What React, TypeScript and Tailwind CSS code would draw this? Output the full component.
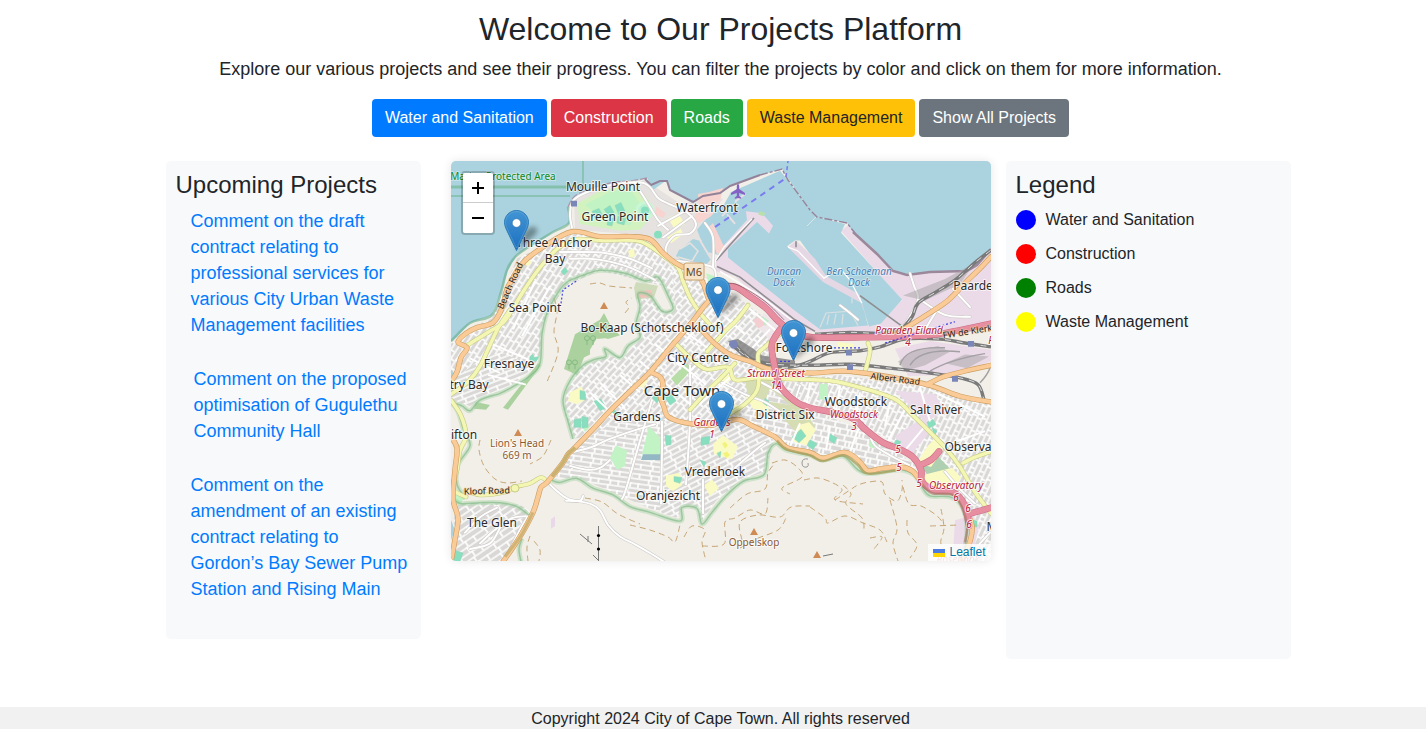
import React from "react";

type Pt = [number, number];

const parse = (s: string): Pt[] =>
  s.split(" ").map((p) => p.split(",").map(Number) as Pt);

/** Turns a list of points into a smooth curve that passes through each one. */
function curve(s: string): string {
  const p = parse(s);
  let d = `M${p[0][0]} ${p[0][1]}`;
  for (let i = 0; i < p.length - 1; i++) {
    const a = p[i - 1] ?? p[i];
    const b = p[i];
    const c = p[i + 1];
    const e = p[i + 2] ?? c;
    d += `C${b[0] + (c[0] - a[0]) / 6} ${b[1] + (c[1] - a[1]) / 6} ${c[0] - (e[0] - b[0]) / 6} ${c[1] - (e[1] - b[1]) / 6} ${c[0]} ${c[1]}`;
  }
  return d;
}

const SURVEY = "matrix(1 0 0 .968 0 5.152)";

function Road({ pts, w, fill, edge }: { pts: string[]; w: number; fill: string; edge: string }) {
  return (
    <g fill="none" strokeLinecap="round" strokeLinejoin="round">
      {pts.map((p) => (
        <path key={"e" + p} d={curve(p)} stroke={edge} strokeWidth={w + 1.2} />
      ))}
      {pts.map((p) => (
        <path key={"f" + p} d={curve(p)} stroke={fill} strokeWidth={w} />
      ))}
    </g>
  );
}

const orange = [
  "451,389 457,379 461,364 467,354 458,348 466,339 477,333 493,328 502,313 506,297 510,287 523,266 543,250 572,234 600,239 630,239 650,242 663,256 675,266 686,272 695,275 703,287 708,302",
  "722,290 705,310 690,330 670,354 650,379 630,399 611,418 593,438 573,459 568,464 562,474 547,493 541,498 538,508 533,524 520,549 503,575",
  "700,334 714,349 730,361 750,368 770,376 810,380 843,378 877,382 927,392 960,404 991,410",
  "927,392 943,384 965,378 991,372",
  "905,334 925,321 948,305 965,287 980,272 991,260",
  "650,379 660,384 663,393 660,402 664,415 668,425 683,431 710,434 737,428 753,435 775,446 787,457 810,462 823,468 843,462 852,465 860,472 868,481 880,479 900,477 912,481 920,491",
  "451,446 457,458 455,480 453,510 458,530 455,552 451,575",
  "965,518 972,538 970,554 962,575",
];
const pink = [
  "720,291 735,291 750,301 766,313 778,326 792,337 812,343 863,343 910,342 943,339 991,329",
  "780,335 772,350 774,370 780,393 795,409 810,416 830,420 853,427 865,438 883,452 900,459 913,467 921,480 922,492 934,501 953,503 965,517 969,538",
  "923,474 932,469 939,461",
  "967,526 978,523 991,519",
];
const yellow = [
  "466,352 485,340 503,328 512,315 525,293 540,271 558,251 575,242 600,243 635,243 650,249 666,261",
  "451,402 468,389 480,373 490,351 499,332 510,315",
  "466,501 480,506 505,503 514,498 530,494 541,488 548,493",
  "451,408 461,424 466,445 460,460 457,480 453,500 466,508",
  "664,259 678,271 683,285 690,302 700,318 710,330",
  "748,310 737,325 724,338 707,358",
  "674,348 690,364 706,376 728,374 735,387 758,385 785,386 830,388 860,395 895,407 912,423 931,442 946,458 960,477 975,503 991,525",
  "783,337 764,354 758,361 759,380 757,398 745,412 728,423",
  "735,370 720,386 706,400 690,418",
  "868,349 870,358 865,379",
  "963,473 975,467 991,461",
];

const white = [
  "572,230 570,215 574,201 590,192 615,185 640,183 650,188 659,200 675,208 688,215 696,226 690,236 675,238 666,250 670,262 690,266 713,271 716,285",
  "634,183 645,200 658,222 668,232",
  "658,228 690,210",
  "663,240 692,218",
  "705,225 713,240 713,271",
  "570,262 590,262 610,265 632,272 655,284",
  "560,255 580,255 605,256 630,262 652,272",
  "568,463 590,457 610,448 632,440 655,433",
  "548,493 555,500 568,510 590,515 600,522 608,537 620,549 635,557 650,566 664,575",
  "566,512 580,512 583,507",
  "662,430 662,460 661,515",
  "690,372 690,430 686,495",
  "652,408 640,450 626,500 622,510",
  "703,490 703,525",
  "570,476 588,480 600,478 610,470",
  "910,277 914,290 918,304 908,325 900,335",
  "920,304 945,320 970,322",
  "953,293 970,312",
  "940,310 925,335",
  "870,445 875,455 890,465 909,475",
  "758,388 780,400 800,412",
  "800,393 795,409",
  "722,390 745,402 765,410 780,420",
  "840,310 850,318 858,325",
  "510,562 521,540 528,528",
  "480,556 495,542 512,530 526,528",
  "465,545 480,529 497,519",
  "470,562 490,556 500,540",
  "735,478 755,460 765,452",
  "972,565 990,545",
  "945,482 960,500 975,515",
];

const rail = [
  "730,349 745,362 760,372 790,374 810,368 830,359 860,357 880,353 905,345 940,345 965,349 991,353",
  "736,352 752,366 775,371 812,372 850,371 890,375 930,380 960,385 978,392 984,408",
  "815,340 850,338 880,339 900,335 912,322 918,308 935,297 955,284 975,266 991,253",
];

const trails = [
  "554,298 557,312 554,332 558,352 547,382",
  "590,284 600,283 609,286 632,288",
  "625,313 629,307 626,302 632,298",
  "480,440 479,450 484,466 495,479 507,483 522,481",
  "551,440 543,456 530,464",
  "585,498 602,502 618,514 640,524",
  "530,536 527,547 528,561",
  "534,541 540,550 539,561",
  "630,525 650,530 668,537 675,542 680,525",
  "684,537 692,526 705,530 702,542 706,561",
  "702,546 724,544 725,522 735,518 750,510 765,514 768,498",
  "730,508 747,494 765,489 768,473 775,463",
  "742,540 740,522 758,515 780,517 791,507 810,506",
  "740,548 756,539 778,530 786,518",
  "772,463 785,460 797,467 802,477 782,488 790,494",
  "804,480 818,478 833,483 842,490 835,500 863,504",
  "835,500 850,490 858,485 869,482 882,482 885,494 897,501 902,490 902,480",
  "843,485 851,494 846,504 862,518 864,530",
  "810,507 825,518 828,523 845,516 863,523 880,530 887,542",
  "890,500 897,528 893,543 898,561",
  "903,487 909,504 921,506 936,515 944,524",
  "907,520 908,533 917,545 910,558",
  "930,526 960,525",
  "941,509 944,528 941,544 952,556",
  "870,538 882,537 874,549",
];

const protectedEdge = [
  "451,410 462,414 470,419 480,408 500,401 510,396 530,383 540,370 542,340 547,318 558,297 567,286 583,279 600,274 625,277 646,285 658,281 668,300 673,314 662,316 650,300 638,298 640,312 636,330 640,343 628,352 620,364 605,355 606,363 595,366 583,372 570,388 563,408 568,430 573,448",
  "552,491 560,493 577,489 593,499 613,506 630,518 650,524 680,533 682,519 697,520 702,536 712,524 725,508 743,492 764,485 768,463 776,453 787,460 810,465 823,470 843,466 858,480 871,484 900,480 915,486 922,498 930,507 950,508 962,518 967,543 962,575",
  "455,512 462,515 480,514 500,514 517,518 530,528",
  "522,551 519,562 521,575",
  "451,410 458,420 464,440 470,455 458,475 457,495 466,510",
];

/** label, x, y, size */
const places: [string, number, number, number][] = [
  ["Mouille Point", 603, 191, 12],
  ["Green Point", 615, 221, 12],
  ["Waterfront", 707, 212, 12],
  ["Three Anchor", 554, 247, 12],
  ["Bay", 555, 263, 12],
  ["Sea Point", 535, 312, 12],
  ["Fresnaye", 509, 368, 12],
  ["try Bay", 469, 389, 12],
  ["ifton", 464, 439, 12],
  ["The Glen", 492, 527, 12],
  ["Bo-Kaap (Schotschekloof)", 652, 332, 12],
  ["City Centre", 698, 362, 12],
  ["Cape Town", 682, 396, 15],
  ["Gardens", 637, 421, 12],
  ["Vredehoek", 715, 476, 12],
  ["Oranjezicht", 668, 500, 12],
  ["Foreshore", 804, 352, 12],
  ["District Six", 785, 419, 12],
  ["Woodstock", 856, 406, 12],
  ["Salt River", 936, 414, 12],
  ["Paarde", 973, 290, 12],
  ["Observa", 968, 451, 12],
  ["M", 992, 531, 12],
];

const stations: [string, number, number, number][] = [
  ["Strand Street", 776, 377, 10],
  ["1A", 776, 389, 10],
  ["Gardens", 712, 426, 10],
  ["1", 712, 438, 10],
  ["Paarden Eiland", 909, 334, 10],
  ["4", 908, 346, 10],
  ["Woodstock", 854, 418, 10],
  ["3", 854, 430, 10],
  ["Observatory", 956, 489, 10],
  ["5", 898, 453, 10],
  ["5", 899, 471, 10],
  ["5", 919, 487, 10],
  ["6", 956, 501, 10],
  ["6", 968, 512, 10],
  ["6", 969, 528, 10],
  ["R", 991, 344, 10],
];

const pitches =
  "M592 213l7-3 4 8-7 4zM604 211l6-4 4 7-5 4zM615 207l6-3 4 9-6 4zM618 218l8 2-2 7-7-2zM608 221l6-1-2 8-5-1zM580 398l5 1 1 9-6-1zM594 409l7-2 5 9-6 3zM574 428l7-1v9h-7zM582 425l6 1v10l-6 1zM612 416l7 7-3 4-6-6zM665 405l6-4 5 8-6 4zM765 406l4 3-2 5-4-3zM830 443l7 4-3 6-5-4zM927 431l6-3 3 5-7 4zM932 436l5 4-3 5zM810 449l7 4-4 6-6-4zM896 449l5 2-2 4-5-2zM701 447l9-2-1 8-8 2zM665 444l6 1v9l-5 1zM700 470l6 2-2 5zM674 487l8 1-2 6-6-2zM973 532l4 1v6h-4zM451 562l12 4-3 9h-9zM530 363l3-2 1 3 5-1-3 5-6-1zM717 463l4-2-1 7zM792 446l9-8 5 7-7 7zM656 400l5 5-4 6-5-5zM561 275l4-4 3 4-4 4z";
const yards =
  "M668 220l10-5 7 11-10 6zM667 240l14-9 2 6-12 9zM570 400l12-6 3 14-8 4-9-3zM713 453l10-9 15 12-6 13-18-5zM666 486l14-3 2 13-9 6-7-5zM704 496l8-6 7 9-9 8zM718 382l8-3 6 7-8 6zM798 434l11-3 7 8-10 16-15-5zM745 403l22 5 2 12-16-3zM838 348l16 2-2 6h-14zM918 471l10-16 9-9 6 14-12 17-7-2zM924 485l28-7 9 10-7 12-22-4-8-4zM628 254l6-3 1 8-5 3zM640 385l8 3-5 8-6-4zM735 412l7 4-4 9-6-4zM525 266l5-3 2 3-5 4z";

function Marker({ x, y }: { x: number; y: number }) {
  return (
    <g>
      <path d={`M${x} ${y}l8-19q7-8 12-4q3 4-5 10z`} fill="#000" opacity=".36" filter="url(#soft)" />
      <g transform={`translate(${x - 12.5} ${y - 41})`}>
        <path
          d="M12.5 .5C5.8 .5.5 5.9.5 12.4c0 2.7 1.2 5.7 2.3 8L12.5 40.5l9.7-20.1c1.1-2.3 2.3-5.3 2.3-8C24.500 5.900 19.200.500 12.500.500z"
          fill="url(#pin)"
          stroke="#2d7cb8"
        />
        <path
          d="M12.5 1.600C6.500 1.600 1.600 6.400 1.600 12.400c0 2.500 1.100 5.200 2.200 7.500L12.500 38l8.700-18.100c1.100-2.300 2.200-5 2.200-7.500 0-6-4.900-10.800-10.900-10.800z"
          fill="none"
          stroke="#fff"
          strokeOpacity=".14"
        />
        <circle cx="12.5" cy="13" r="4.300" fill="#fff" stroke="#2a70a5" strokeWidth=".6" />
      </g>
    </g>
  );
}

function Grid({ id, w, h, angle }: { id: string; w: number; h: number; angle: number }) {
  return (
    <pattern id={id} width={w * 2} height={h * 2} patternUnits="userSpaceOnUse" patternTransform={`rotate(${angle})`}>
      <rect width={w * 2} height={h * 2} fill="#dad8d6" />
      <path
        d={`M0 1H${w * 2}M0 ${h + 1}H${w * 2}M1 0V${h}M${w + 1} ${h}V${h * 2}M${w + 3} 0V${h}`}
        stroke="#fff"
        strokeWidth="1.700"
        fill="none"
      />
    </pattern>
  );
}

function CityMap() {
  return (
    <svg
      viewBox="451 161 540 400"
      preserveAspectRatio="xMidYMid slice"
      className="block h-full w-full"
      role="img"
      aria-label="Street map of Cape Town"
      fontFamily="'Noto Sans', sans-serif"
    >
      <defs>
        <linearGradient id="pin" x1="0" y1="0" x2="0" y2="1">
          <stop offset="0" stopColor="#4295d3" />
          <stop offset="1" stopColor="#1b6fbf" />
        </linearGradient>
        <filter id="soft" x="-50%" y="-50%" width="200%" height="200%">
          <feGaussianBlur stdDeviation="2.500" />
        </filter>
        <Grid id="sea" w={8} h={5} angle={-58} />
        <Grid id="slope" w={12} h={5} angle={-22} />
        <Grid id="bowl" w={7} h={5} angle={-48} />
        <Grid id="south" w={10} h={5} angle={8} />
        <Grid id="vrede" w={12} h={5} angle={-28} />
        <Grid id="east" w={6} h={6} angle={12} />
        <Grid id="river" w={7} h={5} angle={-66} />
        <Grid id="glen" w={12} h={6} angle={-35} />
      </defs>

      <rect x="451" y="161" width="540" height="400" fill="#f2efe9" />

      <g transform={SURVEY}>
        {/* built-up areas */}
        <path d="M503 295L517 262 552 244 575 236 648 244 672 272 690 310 675 314 664 290 646 286 600 274 566 290 549 316 542 335 540 366 510 394 478 408 470 414 451 408V350L470 333 492 324z" fill="url(#sea)" />
        <path d="M451 408V388L478 368 500 358 534 374 510 394 478 408 470 414z" fill="url(#slope)" />
        <path d="M672 268L716 285 780 335 772 374 812 382 800 410 770 414 735 430 690 434 668 432 600 444 573 448 564 420 566 398 582 373 606 363 620 364 640 343 638 300 650 300 664 316 676 314z" fill="url(#bowl)" />
        <path d="M575 455L612 432 665 428 665 524 650 520 612 503 578 488 555 490 565 470z" fill="url(#south)" />
        <path d="M662 430L735 430 775 446 765 482 742 490 716 512 702 532 696 518 682 517 678 530 660 524z" fill="url(#vrede)" />
        <path d="M735 429L768 408 800 413 865 440 920 478 870 480 844 462 822 467 785 455z" fill="url(#east)" />
        <path d="M780 388L840 382 926 394 991 412V575H962L972 535 955 500 925 488 918 468 864 434 800 410z" fill="url(#river)" />
        <path d="M455 516L480 514 520 516 532 524 518 549 502 575H451z" fill="url(#glen)" />
        <path d="M574 197L645 181 680 205 705 200 715 250 712 270 672 264 648 238 575 232z" fill="#e6e2e0" />

        {/* industrial and harbour land */}
        <path d="M720 265L790 335 870 342 910 340 991 328V248L968 271 907 275 893 272 850 226 841 233 902 305 870 328 820 330 740 262z" fill="#ebdbe8" />
        <path d="M895 355L930 347 991 356V368L945 382 908 383 900 366zM895 398L935 402 945 420 925 430zM895 445L925 425 931 440 918 455 912 465 900 456zM955 532l18-5 6 12-6 26h-20z" fill="#ebdbe8" />
        <path d="M764 318L790 335 788 350 776 352 755 330z" fill="#efe6ea" />

        {/* green areas */}
        <path d="M577 205L600 192 618 188 634 186 648 200 655 214 640 232 620 233 580 226z" fill="#d2f2c0" />
        <path d="M612 192L630 190 640 205 630 228 600 220 585 206zM706 277l9 3 2 10-8-2zM580 432l10 3-5 6zM649 435l13 14v16l-20-1zM455 504l9 6-5 6-8-3zM819 392l9-1v17l-9-1zM616 455l11 5-2 16-8 4-7-13zM869 449l8 3-3 6-5-2z" fill="#c2f3c4" />
        <path d="M575 340L600 325 604 318 611 332 620 341 608 345 598 342 590 356 590 361 584 364 577 382 564 376zM538 370L503 416 508 418 541 372zM476 410l14 3-4 5-12-1zM600 330l5 14-8 1z" fill="#abd29e" />
        <path d="M671 386L687 370 692 376 677 393z" fill="#b7dea6" />
        <path d="M920 477l14-15 17 18-4 4-18 2z" fill="#aecfb0" />
        <path d="M634 292l2-6 22 4-4 12-18 2z" fill="#cfdcbc" />
        <path d="M637 296l14-2 2 7-14 2z" fill="#f0c3bd" />
        <path d="M745 388L775 387 800 412 815 435 806 452 795 440 770 412 748 404z" fill="#d6ddb3" />
        <path d="M770 396L790 413 765 409z" fill="url(#east)" />
        <path d={yards} fill="#fafac4" />
        <path d={pitches} fill="#88dfc0" stroke="#8fd2b6" strokeWidth=".5" />
        <circle cx="645" cy="212" r="8" fill="#b9f0cf" stroke="#c9f7d6" strokeWidth="3" />
        <circle cx="645" cy="212" r="4" fill="#88dfc0" />
        <circle cx="658" cy="237" r="4" fill="#88dfc0" />
        <path d="M643 464h18v6h-20z" fill="#94b7c5" />
        <path d="M551 531l4-3v10l-4 3z" fill="#e8d8ea" />
        <path d="M753 325l9-4 5 8-9 5z" fill="#f4ced0" />
        <path d="M762 321l7 5-4 6z" fill="#bdecc6" />
        <path d="M722 453l3-2 3 4-3 3zM723 463l4-2 3 4-4 3z" fill="#eeee4a" opacity=".6" />
      </g>

      {/* water */}
      <path d="M451 161H991V248L977 265 967 271 930 272 907 274 893 272 877 253 853 232 847 223 817 217 810 210 787 177 782 169 760 175 730 185 720 192 702 195 693 202 670 190 667 180 653 190 647 178 630 182 593 188 575 197 568 207 570 223 553 232 545 238 528 247 517 255 508 270 502 290 492 315 470 323 457 337 451 342z" fill="#aad3df" />
      <path d="M679 250l14-11 12 3 6 17-6 7-22-4-7-6zM451 370l4 4-2 9h-2zM451 520l4 10-4 10z" fill="#aad3df" />
      <path d="M680 249l10-6 8 8-6 10-14-4" stroke="#e6e2e0" strokeWidth="1.500" fill="none" />
      <g transform={SURVEY}>
        <path d="M731 193L780 171 788 181 815 218 845 226 841 235 902 304 881 329 869 332 862 310 855 298 826 280 800 243 795 243 787 249 823 284 862 308 868 331 820 335 795 316 728 261 708 255 700 240 697 232 705 222 724 206z" fill="#aad3df" />

        {/* quays */}
        <path d="M716 265L722 250 738 232 747 222 746 213 762 215 773 228 769 236 763 230 757 224 728 252 728 261 795 316 820 335 800 338 770 312 735 280 716 275z" fill="#ebdbe8" />
        <path d="M760 213l6 2-3 3-5-2z" fill="#b9e0a8" />
        <path d="M698 195l11-2 14-4-4 19-8 10-12 7-5-5 5-11zM709 229l4-4 12 27-8 6zM656 208l10 7-3 5-8-4z" fill="#f7d4cf" />
        <path d="M722 200l-14 16M727 216l8 10M733 206l-11 12M700 243l11 19M745 195l-10 8" stroke="#e9dfe3" strokeWidth="2" fill="none" />
        <path d="M788 250L796 243 815 262 826 280 858 298 868 328 862 308 823 286z" fill="#e5d8e4" />
        <path d="M820 333l6-15 24-2 8 15M829 320l-2 10M836 319l-2 11M843 319l-1 11M852 308v-6M860 306v-5" stroke="#d7dfe3" strokeWidth="1.300" fill="none" />
        <path d="M716 264L754 220M796 244V250M717 270L740 281 770 305 795 325 815 337M860 300L905 334" stroke="#8f8e90" strokeWidth="1.600" fill="none" />
        <path d="M713 268L724 250 752 221M788 250l10 4 26 28 16-10 10 12 12 24M720 275L760 300 800 332" stroke="#fff" strokeWidth="1.300" fill="none" />
      </g>

      {/* shore works */}
      <path d={curve("568,207 575,196 593,188 615,182 630,181 647,178")} stroke="#a897ab" strokeWidth="1.300" fill="none" strokeDasharray="7 2" />
      <path d="M645 179L651 185 660 181 667 181 670 190 693 202 703 196 720 193 730 186 760 175" stroke="#93839a" strokeWidth="2" fill="none" />
      <path d="M760 175L782 169 788 180 810 210 817 217 847 223 855 233" stroke="#97849c" strokeWidth="1.400" fill="none" strokeDasharray="8 2 3 2" />
      <path d="M816 217l-9 9" stroke="#d9e5e9" />
      <path d="M853 232L877 254 893 271 907 275 930 272 967 271 977 265 991 249" stroke="#9b889a" strokeWidth="2.500" fill="none" />

      {/* trails */}
      <g fill="none" stroke="#c6a676" strokeWidth="1" strokeDasharray="6 4">
        {trails.map((p) => (
          <path key={p} d={curve(p)} />
        ))}
      </g>

      {/* protected zone outlines */}
      <path d="M583 161V187M451 196H570" stroke="#7cbba0" strokeOpacity=".7" strokeWidth="2" fill="none" />
      <path d="M584 187H451" stroke="#7cbba0" strokeOpacity=".8" strokeWidth="3" fill="none" />
      <path d={curve("568,207 569,223 553,232 530,246 515,257 507,270 501,292 492,315 470,323 451,341")} stroke="#65ad8a" strokeOpacity=".6" strokeWidth="2.500" fill="none" />

      <g transform={SURVEY}>
        {protectedEdge.map((p) => (
          <g key={p} fill="none" strokeLinejoin="round">
            <path d={curve(p)} stroke="#a5d3a5" strokeOpacity=".45" strokeWidth="5" />
            <path d={curve(p)} stroke="#86bb8b" strokeOpacity=".7" strokeWidth="1.500" />
          </g>
        ))}

        {/* streets */}
        <Road pts={white} w={2} fill="#ffffff" edge="#cfccca" />
        <path
          d="M513 335L535 285M522 342L550 290M492 350L528 366M488 382L526 392M470 365L500 380M600 390L625 416M590 400L616 426M620 382L640 400M640 368L690 412M655 350L706 392M675 330L710 356M712 310L745 340M720 305L685 348M740 325L690 378M770 335L745 362M735 380L700 412M748 312L780 340M810 390L806 417M840 393L836 420M860 400L856 425M890 410L885 435M905 418L888 450M925 435L905 460M800 432L790 456M830 435L826 460M858 438L850 462M920 395L930 430M935 400L985 425M945 455L985 440"
          fill="none"
          stroke="#fff"
          strokeWidth="2"
        />

        {/* rail yards and lines */}
        <path d="M728 347L738 345 752 354 762 362 795 367 795 374 765 374 745 366z" fill="#7d7d7d" opacity=".8" />
        <path d="M898 368L915 357 938 352 950 358 925 372 905 378zM945 370l20-9 24 2-22 12zM903 300L945 283 975 266 960 288 925 305z" fill="#aaa6aa" opacity=".55" />
        <g fill="none">
          {rail.map((p) => (
            <path key={p} d={curve(p)} stroke="#7a7a7a" strokeWidth="3.500" />
          ))}
          {rail.map((p) => (
            <path key={"d" + p} d={curve(p)} stroke="#ddd" strokeWidth="1" strokeDasharray="6 6" />
          ))}
          <path d="M900 372Q905 352 945 354M910 372Q920 354 960 358M930 378Q950 366 985 360M980 390Q988 382 991 372" stroke="#a3a0a3" strokeWidth="1.500" />
        </g>

        <Road pts={yellow} w={3.6} fill="#f4f7b4" edge="#c6ca85" />
        <Road pts={orange} w={4.2} fill="#fbcb97" edge="#cb9e62" />
        <path d={curve("552,487 562,474 568,464 575,457")} stroke="#b4a55f" strokeWidth="3.500" fill="none" opacity=".7" />
        <path d={curve("505,570 521,548 533,524")} stroke="#b4a55f" strokeWidth="3" fill="none" opacity=".6" />
        <path d={curve("777,450 787,459 810,465 823,471 843,465 858,475 868,484 900,480")} stroke="#a7a15f" strokeWidth="2.500" fill="none" opacity=".8" />
        <Road pts={pink} w={5.6} fill="#e78fa0" edge="#cc6c86" />
        <path d={curve("921,494 932,504 953,506 962,519 967,538 965,555")} stroke="#ad786b" strokeWidth="2.500" fill="none" opacity=".7" />
        <path d={curve("728,287 740,290 765,306 784,325")} stroke="#8d5060" strokeWidth=".8" fill="none" />
        <circle cx="515" cy="499" r="4" fill="#f4f7b4" stroke="#c5c984" />

        {/* transit dots and stations */}
        <path d="M561 308l2-14 15-10M830 354h30M885 349l70-22M780 368h12" stroke="#3d42e8" strokeWidth="1.200" strokeDasharray="2 2" fill="none" />
        <path d="M571 202h6v6h-6zM846 356h6v6h-6zM847 371h6v6h-6zM952 383h6v6h-6zM968 347h6v6h-6zM730 347l5-1 3 3-1 5-5 1-3-4z" fill="#7b86b8" />
        <g fill="none" stroke="#83b982">
          <circle cx="587" cy="344" r="2.500" />
          <circle cx="593" cy="344" r="2.500" />
          <circle cx="569" cy="369" r="2.500" />
          <circle cx="575" cy="369" r="2.500" />
          <path d="M587 347v4m6-4v4M569 372v4m6-4v4" />
        </g>
      </g>

      {/* ferry */}
      <path d="M715 227L786 178" stroke="#7a7cf0" strokeWidth="2" strokeDasharray="6 5" />
      <path d="M786 177l2-16" stroke="#7a7cf0" strokeWidth="1.500" strokeDasharray="4 3" />

      {/* aeroplane */}
      <path d="M738 184q1 0 1.200 2v3l5.800 4v2l-5.800-2v3l2 1.500v1.200l-3.200-.8-3.200.8v-1.200l2-1.500v-3l-5.800 2v-2l5.800-4v-3q.2-2 1.200-2z" fill="#8461c4" />

      {/* peaks and cableway */}
      <path d="M604 302l4 7h-8zM518 429l4 7h-8zM754 528l4 7h-8zM817 551l4 7h-8z" fill="#cf8b53" />
      <path d="M598.500 526V561M580 534l12 10m-4-2v-6M593 555l5 5M823 556l10-2" stroke="#777" fill="none" />
      <circle cx="598.500" cy="535.500" r="1.600" />
      <circle cx="598.500" cy="549" r="1.600" />
      <path d="M808 459q-6-1-6 4t5 4q2-1 1-4" fill="none" stroke="#999" />

      {/* road shield */}
      <rect x="684" y="263" width="20" height="17" rx="2" fill="#f7e3c8" stroke="#c8a06e" />
      <text x="694" y="276" fontSize="11" textAnchor="middle" fill="#5d4a34">M6</text>

      {/* names */}
      <g textAnchor="middle" paintOrder="stroke" strokeLinejoin="round">
        <text x="503" y="180" fontSize="10" fill="#128a20" stroke="#fff" strokeOpacity=".4" strokeWidth="2">Marine Protected Area</text>
        <g fill="#4a7fb5" stroke="#fff" strokeOpacity=".45" strokeWidth="1.500" fontSize="10" fontStyle="italic">
          <text x="784" y="275">Duncan</text>
          <text x="784" y="286">Dock</text>
          <text x="859" y="275">Ben Schoeman</text>
          <text x="859" y="286">Dock</text>
        </g>
        <g fill="#8a5a35" stroke="#fff" strokeOpacity=".6" strokeWidth="2" fontSize="10">
          <text x="517" y="447">Lion's Head</text>
          <text x="517" y="459">669 m</text>
          <text x="754" y="546">Oppelskop</text>
        </g>
        <g fill="#1d1d1d" stroke="#fbd0a0" strokeOpacity=".6" strokeWidth="1.500" fontSize="9">
          <text transform="translate(513 287) rotate(-66)">Beach Road</text>
          <text transform="translate(895 382) rotate(7)">Albert Road</text>
          <text transform="translate(487 494) rotate(-2)">Kloof Road</text>
          <text transform="translate(972 334) rotate(-9)">FW de Klerk B</text>
        </g>
        {places.map(([name, x, y, size]) => (
          <text key={name + x + y} x={x} y={y} fontSize={size} fill="#2b2b2b" stroke="#fff" strokeOpacity=".65" strokeWidth="2">
            {name}
          </text>
        ))}
        {stations.map(([name, x, y, size]) => (
          <text key={name + x + y} x={x} y={y} fontSize={size} fontStyle="italic" fill="#b5213b" stroke="#fff" strokeOpacity=".75" strokeWidth="2">
            {name}
          </text>
        ))}
        <text x="958" y="563" fontSize="10" fontStyle="italic" fill="#b5213b" opacity=".6">Rosebank</text>
      </g>

      <Marker x={516.5} y={251} />
      <Marker x={718} y={318} />
      <Marker x={793.5} y={361} />
      <Marker x={721.5} y={432} />
    </svg>
  );
}

const filters = [
  { label: "Water and Sanitation", style: "bg-[#007bff] text-white" },
  { label: "Construction", style: "bg-[#dc3545] text-white" },
  { label: "Roads", style: "bg-[#28a745] text-white" },
  { label: "Waste Management", style: "bg-[#ffc107] text-[#212529]" },
  { label: "Show All Projects", style: "bg-[#6c757d] text-white" },
];

const legend = [
  { label: "Water and Sanitation", dot: "bg-[#0000ff]" },
  { label: "Construction", dot: "bg-[#ff0000]" },
  { label: "Roads", dot: "bg-[#008000]" },
  { label: "Waste Management", dot: "bg-[#ffff00]" },
];

const upcoming = [
  {
    title:
      "Comment on the draft contract relating to professional services for various City Urban Waste Management facilities",
    pad: "pl-[15px]",
  },
  { title: "Comment on the proposed optimisation of Gugulethu Community Hall", pad: "pl-[18px]" },
  {
    title:
      "Comment on the amendment of an existing contract relating to Gordon’s Bay Sewer Pump Station and Rising Main",
    pad: "pl-[15px]",
  },
];

export default function App() {
  return (
    <div className="bg-white font-['Liberation_Sans',Arial,sans-serif] text-base text-[#212529]">
      <div className="pl-[15px]">
        <header className="flex flex-col items-center pt-[10px] text-center">
          <h1 className="mb-2 text-[32px] leading-[38px]">Welcome to Our Projects Platform</h1>
          <p className="mb-4 text-[18px] leading-[27px]">
            Explore our various projects and see their progress. You can filter the projects by color and click on them
            for more information.
          </p>
          <div className="flex flex-wrap justify-center gap-1">
            {filters.map((f) => (
              <button key={f.label} type="button" className={`h-[38px] rounded px-[13px] leading-6 ${f.style}`}>
                {f.label}
              </button>
            ))}
          </div>
        </header>

        <main className="mx-auto mt-6 grid max-w-[1140px] grid-cols-4">
          <aside className="px-[15px] pb-5">
            <div className="rounded-[5px] bg-[#f8f9fa] px-[10px] pb-[9px] pt-[10px]">
              <h2 className="mb-[9px] text-2xl leading-[28px]">Upcoming Projects</h2>
              <ul>
                {upcoming.map((u) => (
                  <li key={u.title} className={`mb-7 text-[18px] leading-[26px] ${u.pad}`}>
                    <a href="#project" className="text-[#007bff] hover:underline">
                      {u.title}
                    </a>
                  </li>
                ))}
              </ul>
            </div>
          </aside>

          <section className="col-span-2 px-[15px]">
            <div className="relative h-[400px] overflow-hidden rounded-[5px] shadow-[0_0_10px_rgba(0,0,0,0.1)]">
              <CityMap />
              <div className="absolute left-[10px] top-[10px] flex flex-col rounded border-2 border-black/20 bg-clip-padding font-bold text-black">
                <button type="button" aria-label="Zoom in" className="flex h-[30px] w-[30px] items-center justify-center rounded-t-[2px] border-b border-[#ccc] bg-white">
                  <svg viewBox="0 0 12 12" className="h-3 w-3" stroke="currentColor" strokeWidth="2">
                    <path d="M6 0v12M0 6h12" />
                  </svg>
                </button>
                <button type="button" aria-label="Zoom out" className="flex h-[30px] w-[30px] items-center justify-center rounded-b-[2px] bg-white">
                  <svg viewBox="0 0 12 12" className="h-3 w-3" stroke="currentColor" strokeWidth="2">
                    <path d="M0 6h12" />
                  </svg>
                </button>
              </div>
              <div className="absolute bottom-0 right-0 bg-white/80 px-[5px] text-xs leading-[17px]">
                <a href="#leaflet" className="flex items-center gap-1 text-[#0078a8]">
                  <svg viewBox="0 0 12 8" className="h-2 w-3">
                    <path fill="#4c7be1" d="M0 0h12v4H0z" />
                    <path fill="#ffd500" d="M0 4h12v4H0z" />
                  </svg>
                  Leaflet
                </a>
              </div>
            </div>
          </section>

          <aside className="rounded-[5px] bg-[#f8f9fa] p-[10px]">
            <h2 className="mb-[9px] text-2xl leading-[28px]">Legend</h2>
            <ul className="flex flex-col gap-[10px]">
              {legend.map((l) => (
                <li key={l.label} className="flex items-center gap-[10px] leading-6">
                  <span className={`h-5 w-5 rounded-full ${l.dot}`} />
                  {l.label}
                </li>
              ))}
            </ul>
          </aside>
        </main>
      </div>

      <footer className="mt-12 bg-[#f1f1f1] pl-[15px] text-center leading-6">
        Copyright 2024 City of Cape Town. All rights reserved
      </footer>
    </div>
  );
}
